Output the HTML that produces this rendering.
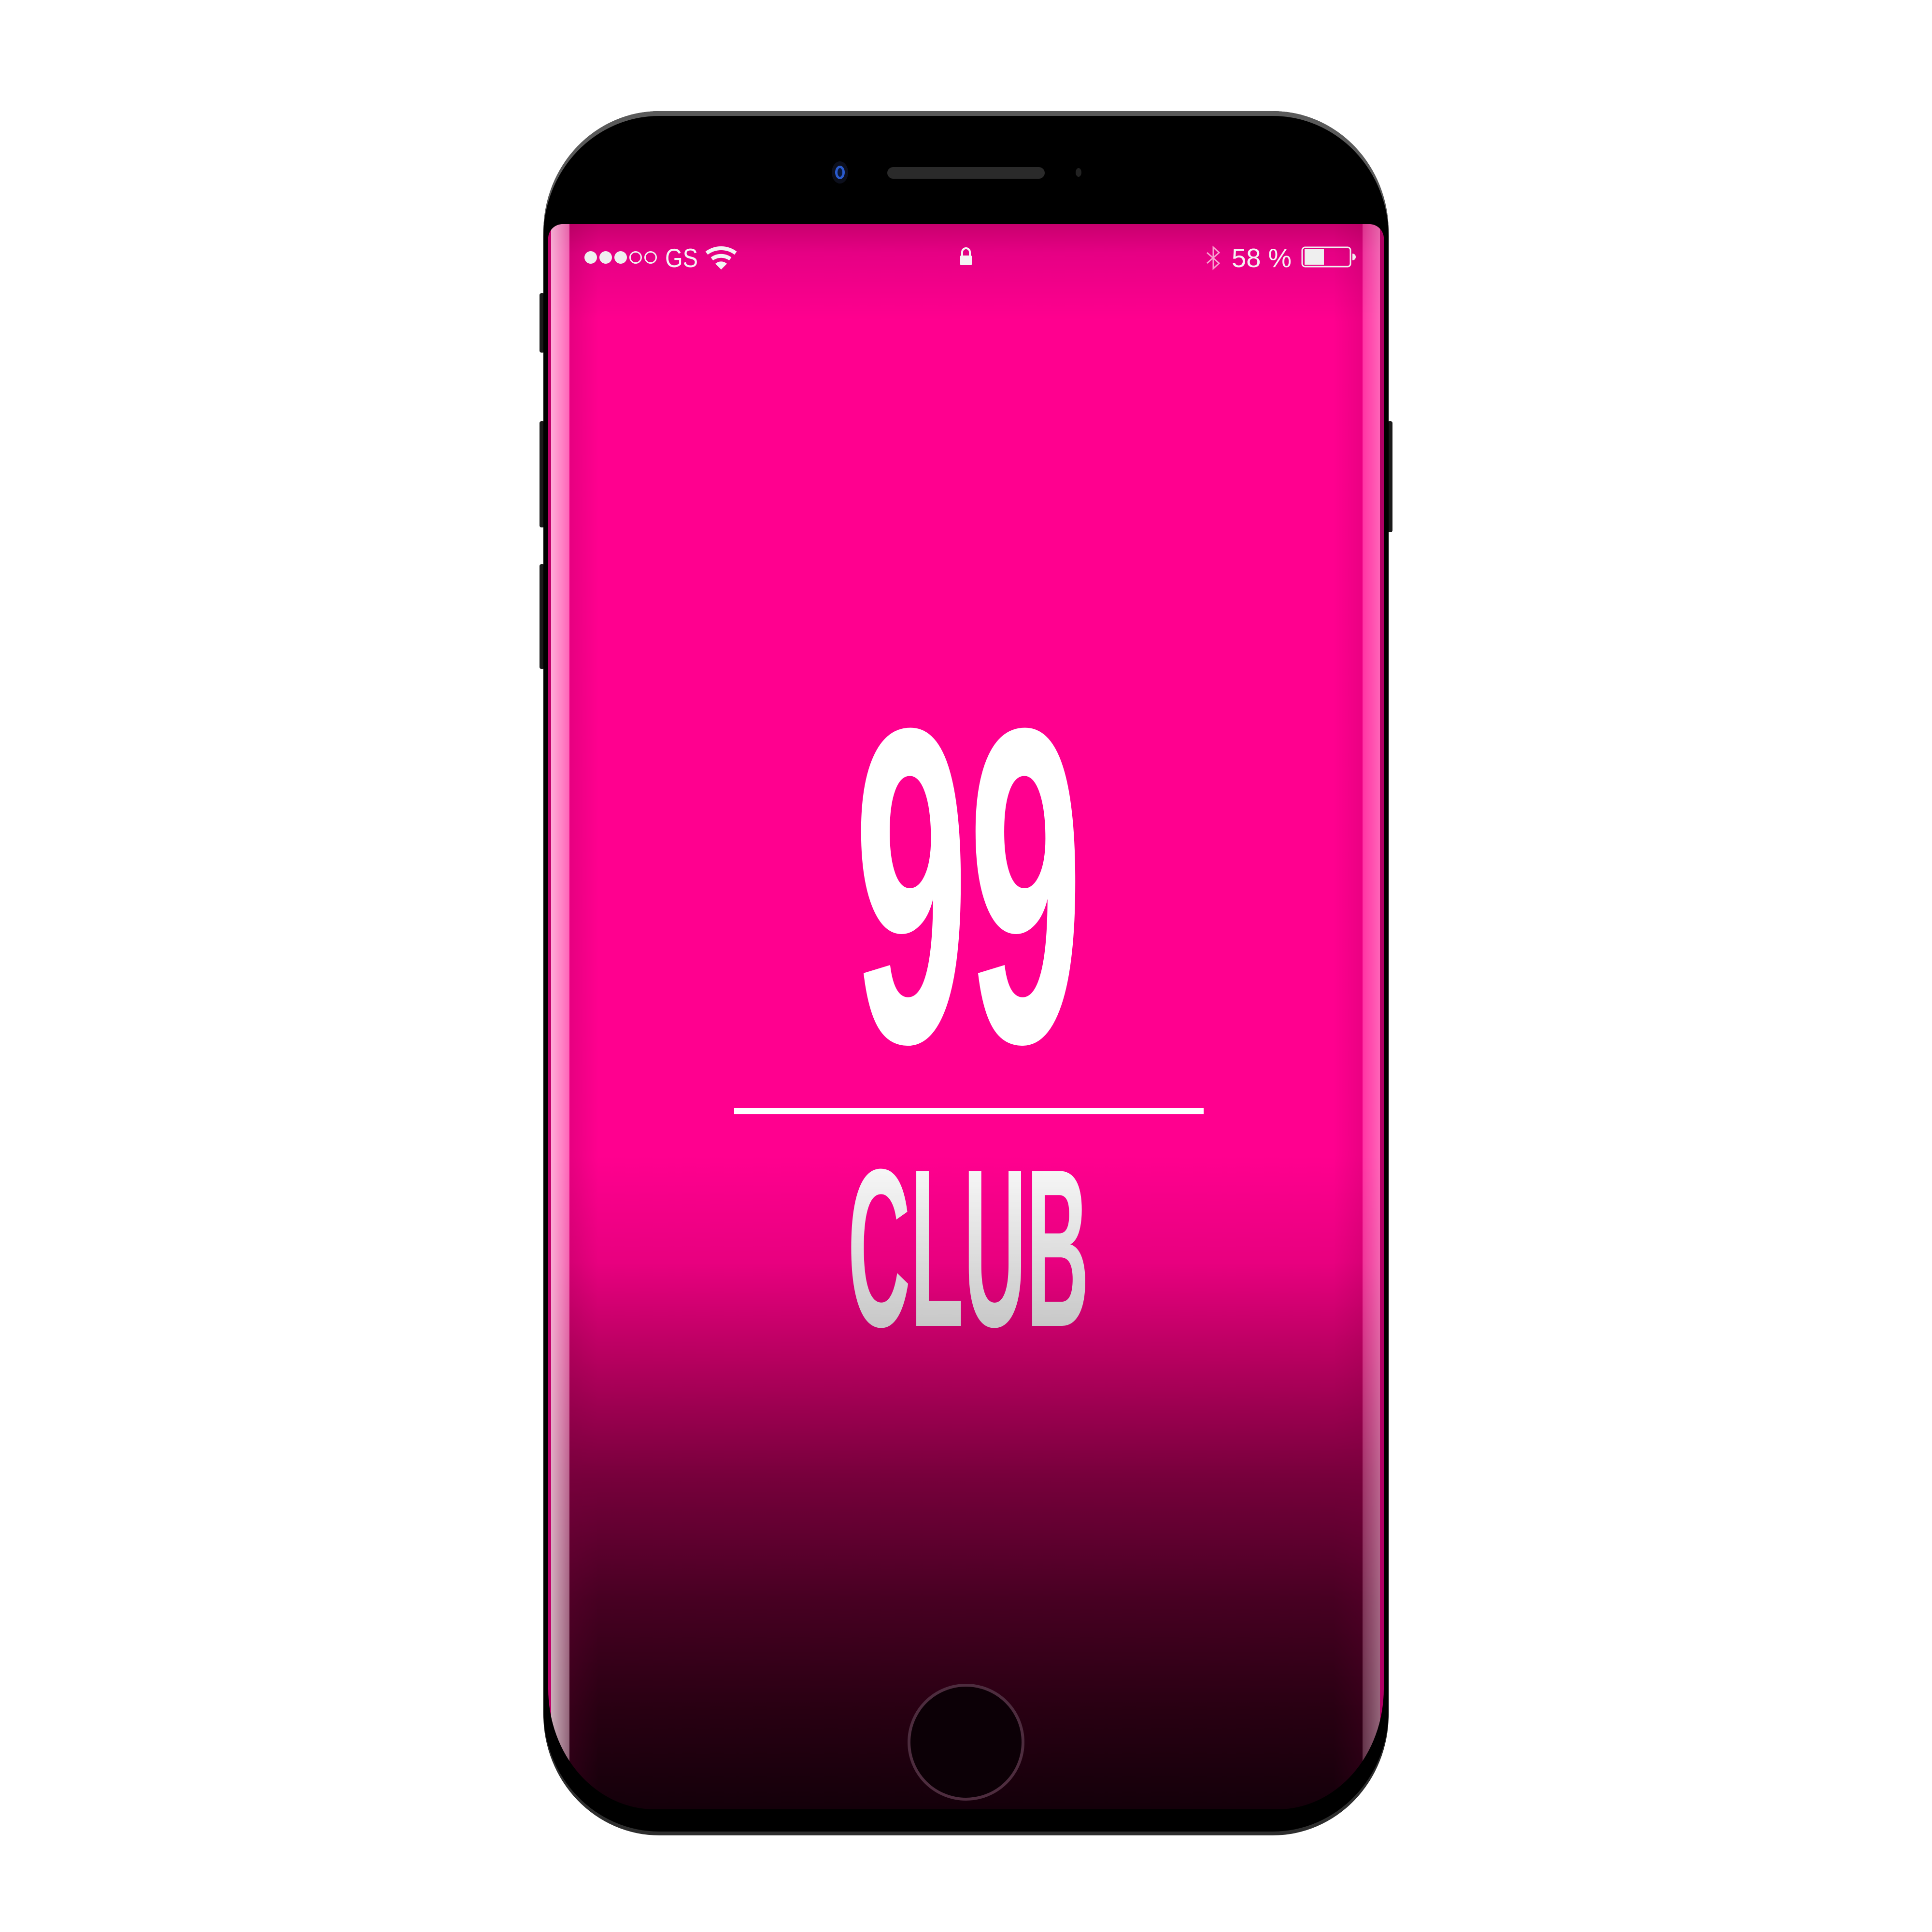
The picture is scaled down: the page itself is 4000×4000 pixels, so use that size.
<!DOCTYPE html>
<html><head><meta charset="utf-8"><style>
html,body{margin:0;padding:0;background:#fff;width:4000px;height:4000px;overflow:hidden}
.abs{position:absolute}
#phone{left:1125px;top:230px;width:1750px;height:3562px;border-radius:240px/250px;background:#000;box-shadow:0 10px 0 #5a5a5a inset,0 8px 0 #2e2e2e;overflow:hidden}
#screen{left:1135px;top:464px;width:1730px;height:3282px;border-radius:30px 30px 220px 220px/30px 30px 250px 250px;overflow:hidden;
background:linear-gradient(to bottom,#c8006e 0px,#e60084 60px,#ff008f 200px,#ff008f 1930px,#e8007f 2150px,#b6005f 2350px,#78003c 2590px,#470022 2850px,#280012 3080px,#14000a 3282px)}
.btn{background:#1a1a1a;border-radius:4px}
</style></head><body>
<div class="abs btn" style="left:1117px;top:607px;width:10px;height:123px"></div>
<div class="abs btn" style="left:1117px;top:872px;width:10px;height:220px"></div>
<div class="abs btn" style="left:1117px;top:1168px;width:10px;height:217px"></div>
<div class="abs btn" style="left:2873px;top:872px;width:10px;height:230px"></div>
<div id="phone" class="abs"></div>
<div id="screen" class="abs">
  <div class="abs" style="left:0;top:0;width:6px;height:100%;background:#c0006a"></div>
  <div class="abs" style="left:6px;top:0;width:38px;height:100%;background:linear-gradient(to right,rgba(255,230,240,.75),rgba(255,200,225,.5));"></div>
  <div class="abs" style="left:44px;top:0;width:60px;height:100%;background:linear-gradient(to right,rgba(120,0,60,.18),rgba(0,0,0,0))"></div>
  <div class="abs" style="right:0;top:0;width:8px;height:100%;background:#b00064"></div>
  <div class="abs" style="right:8px;top:0;width:36px;height:100%;background:linear-gradient(to left,rgba(255,200,225,.5),rgba(255,170,210,.3))"></div>
  <div class="abs" style="right:44px;top:0;width:60px;height:100%;background:linear-gradient(to left,rgba(120,0,60,.15),rgba(0,0,0,0))"></div>
</div>
<div class="abs" style="left:1722px;top:334px;width:34px;height:46px;border-radius:50%;background:#0c0f1c"></div>
<div class="abs" style="left:1729px;top:343px;width:20px;height:28px;border-radius:50%;background:#0a1838;box-shadow:0 0 0 5px #2a5acc inset"></div>
<div class="abs" style="left:1837px;top:346px;width:326px;height:24px;border-radius:12px;background:#2a2a2a"></div>
<div class="abs" style="left:2227px;top:348px;width:12px;height:18px;border-radius:50%;background:#222"></div>
<svg class="abs" style="left:0;top:0" width="4000" height="4000" viewBox="0 0 4000 4000">
  <g fill="#f0f0f0">
    <circle cx="1223" cy="533" r="13"/><circle cx="1254" cy="533" r="13"/><circle cx="1285" cy="533" r="13"/>
  </g>
  <g fill="none" stroke="#f0f0f0" stroke-width="3">
    <circle cx="1316" cy="533" r="11.5"/><circle cx="1347" cy="533" r="11.5"/>
  </g>
  <text x="1377" y="553" font-family="Liberation Sans, sans-serif" font-size="55" fill="#f4f4f4" textLength="68" lengthAdjust="spacingAndGlyphs">GS</text>
  <g fill="none" stroke="#f4f4f4" stroke-width="8">
    <path d="M1463 524 A50 50 0 0 1 1523 524"/>
    <path d="M1474 536 A32 32 0 0 1 1512 536"/>
  </g>
  <path d="M1481 546 A18 18 0 0 1 1505 546 L1493 558 Z" fill="#f4f4f4"/>
  <path d="M1992 530 v-8 a8 8 0 0 1 16 0 v8" fill="none" stroke="#f4f4f4" stroke-width="4"/>
  <rect x="1988" y="529" width="24" height="20" rx="2" fill="#f4f4f4"/>
  <path d="M2499 523 L2524 545 L2512 556 L2512 512 L2524 523 L2499 545" fill="none" stroke="#f7a0cf" stroke-width="3"/>
  <text x="2550" y="553" font-family="Liberation Sans, sans-serif" font-size="55" fill="#f4f4f4" textLength="124" lengthAdjust="spacingAndGlyphs">58 %</text>
  <rect x="2696" y="512" width="100" height="40" rx="6" fill="none" stroke="#f0f0f0" stroke-width="3"/>
  <rect x="2701" y="516" width="40" height="32" fill="#efefef"/>
  <path d="M2800 525 a7 7 0 0 1 0 14 z" fill="#efefef"/>
  <text x="1768" y="2156" font-family="Liberation Sans, sans-serif" font-weight="bold" font-size="930" fill="#fff" textLength="474" lengthAdjust="spacingAndGlyphs">99</text>
  <rect x="1520" y="2294" width="972" height="13" fill="#fff"/>
  <defs><linearGradient id="cg" x1="0" y1="2411" x2="0" y2="2745" gradientUnits="userSpaceOnUse"><stop offset="0" stop-color="#f8f8f8"/><stop offset="1" stop-color="#c8c8c8"/></linearGradient></defs>
  <text x="1755" y="2745" font-family="Liberation Sans, sans-serif" font-weight="bold" font-size="466" fill="url(#cg)" textLength="500" lengthAdjust="spacingAndGlyphs">CLUB</text>
  <circle cx="2000" cy="3607" r="118" fill="#0c0006" stroke="#4d2c3e" stroke-width="6"/>
</svg>
</body></html>
